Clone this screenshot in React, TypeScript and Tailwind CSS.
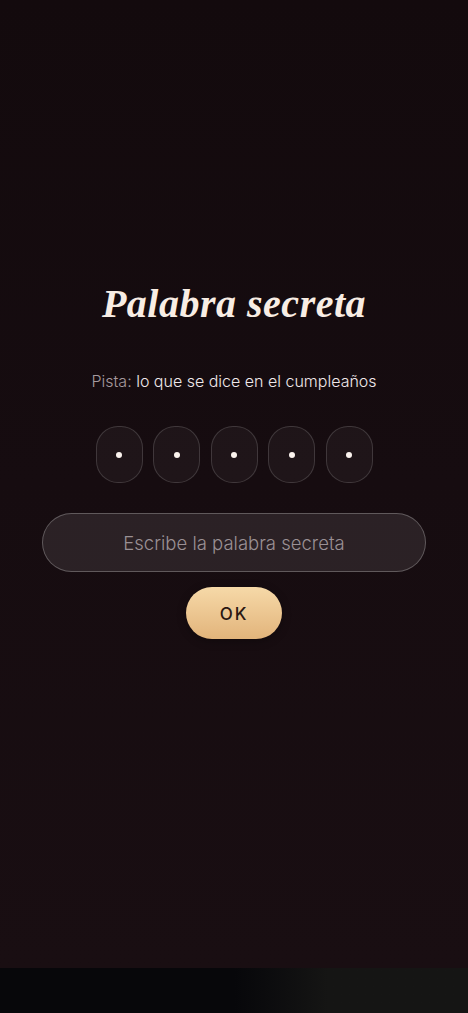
import { useState } from "react";

function App() {
  const [value, setValue] = useState("");
  const slots = [0, 1, 2, 3, 4];

  return (
    <div className="min-h-[1013px] w-full bg-[#150b0f] flex flex-col">
      <div className="h-[968px] w-full bg-gradient-to-b from-[#130a0d] via-[#160c10] to-[#190e12] flex flex-col items-center pt-[280px]">
        <h1 className="font-['Liberation_Serif',serif] italic font-bold text-[40px] leading-[48px] text-[#f8ede4] tracking-[0.5px]">
          Palabra secreta
        </h1>

        <p className="mt-[41px] font-['Inter',sans-serif] font-light text-[16px] leading-6 text-[#f0e8ea]">
          <span className="text-[#a59a9e]">Pista:</span> lo que se dice en el cumpleaños
        </p>

        <div className="mt-[33px] flex gap-[10.5px]">
          {slots.map((i) => (
            <div
              key={i}
              className="w-[47px] h-[57px] rounded-[22px] border border-white/15 bg-white/[0.04] flex items-center justify-center"
            >
              <span className="w-[6px] h-[6px] rounded-full bg-[#fbf3ee]" />
            </div>
          ))}
        </div>

        <input
          value={value}
          onChange={(e) => setValue(e.target.value)}
          placeholder="Escribe la palabra secreta"
          className="mt-[30px] w-[384px] h-[59px] rounded-full border border-white/25 bg-white/[0.09] text-center font-['Inter',sans-serif] font-light text-[18.5px] text-[#ece4e6] placeholder:text-[#9a9094] outline-none"
        />

        <button className="mt-[15px] w-[96px] h-[52px] rounded-full bg-gradient-to-b from-[#f6d9a8] to-[#e2b47b] font-['Inter',sans-serif] text-[17px] font-medium tracking-[2px] pt-[3px] text-[#2a1712] shadow-[0_2px_10px_rgba(0,0,0,0.3)]">
          OK
        </button>
      </div>

      <div className="h-[45px] w-full bg-gradient-to-r from-[#07070a] from-50% to-[#151514] to-70%" />
    </div>
  );
}

export default App;
